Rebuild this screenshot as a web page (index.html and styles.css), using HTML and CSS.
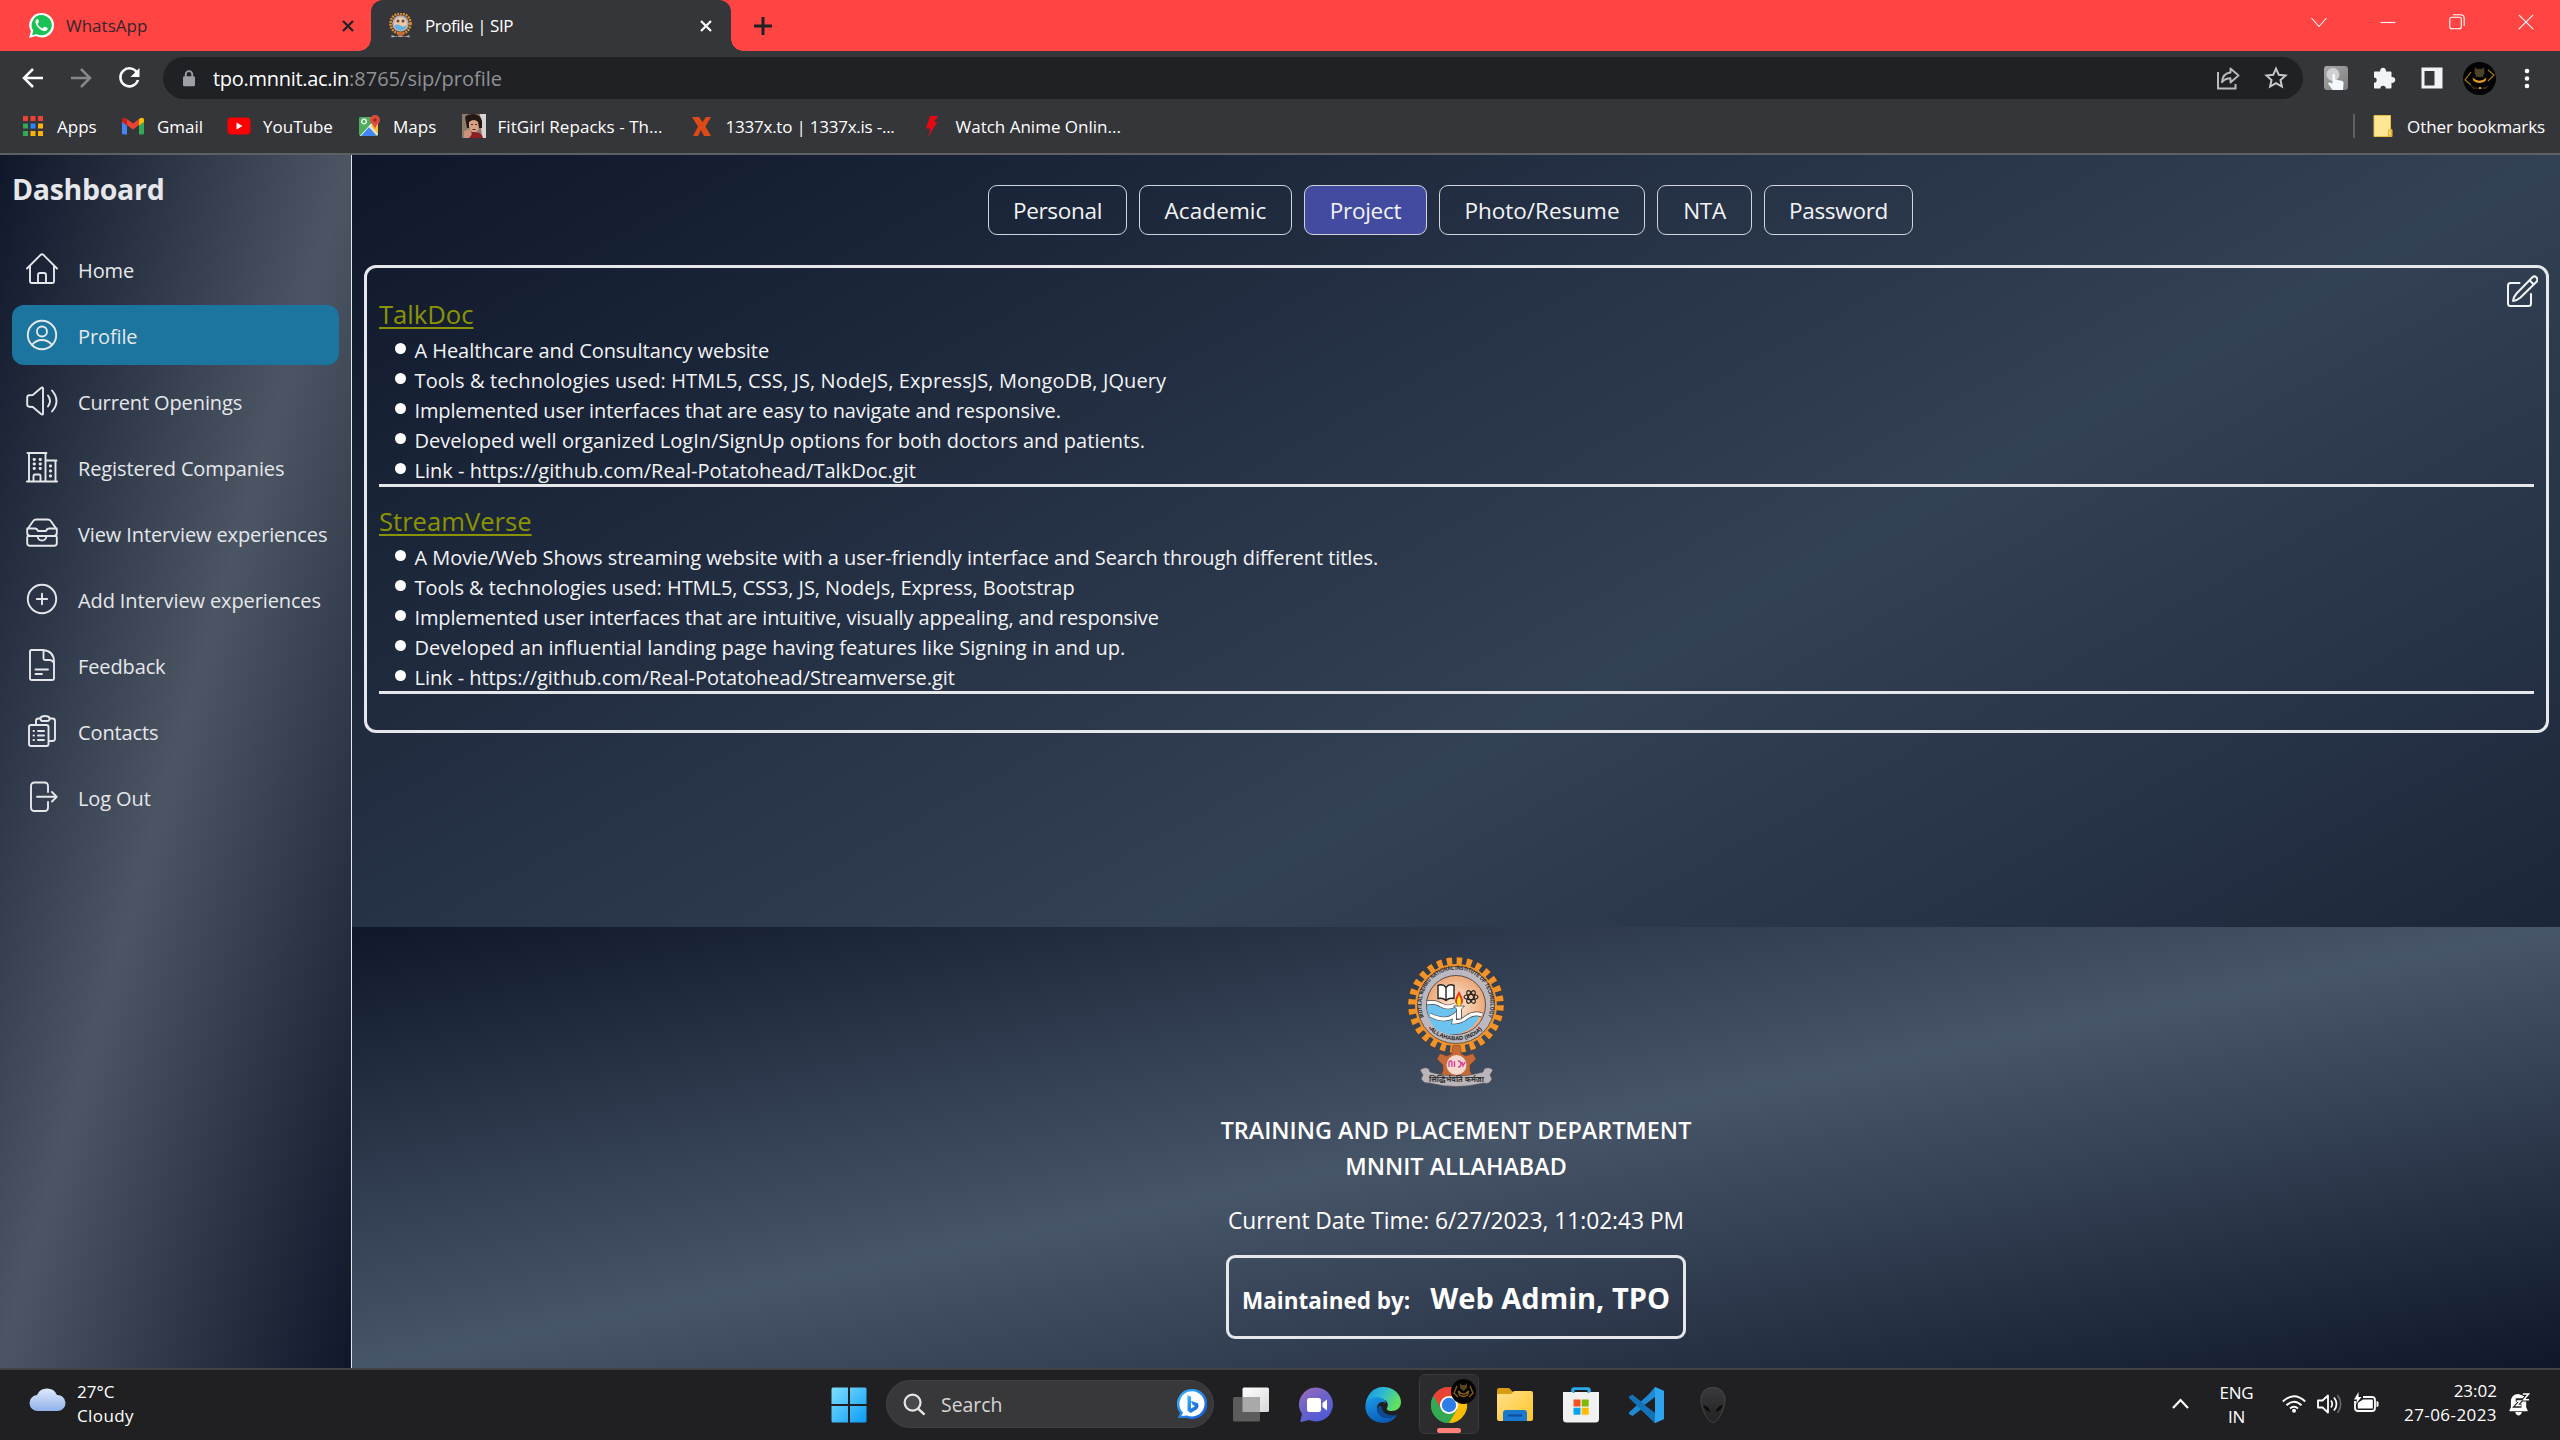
FILE: index.html
```html
<!DOCTYPE html>
<html lang="en">
<head>
<meta charset="utf-8">
<title>Profile | SIP</title>
<link rel="stylesheet" href="styles.css">
</head>
<body>
<svg class="defs" width="0" height="0">
  <defs>
    <path id="arcTop" d="M20.5 67 A34.5 34.5 0 1 1 79.500 67"/>
    <path id="arcBottom" d="M24 75 A38 38 0 0 0 76 75"/>
    <linearGradient id="win" x1="0" y1="0" x2="1" y2="1"><stop offset="0" stop-color="#7fe0ff"/><stop offset="1" stop-color="#0a9bf5"/></linearGradient>
    <linearGradient id="bing" x1="0" y1="0" x2="1" y2="1"><stop offset="0" stop-color="#37bdf8"/><stop offset="1" stop-color="#1553d8"/></linearGradient>
    <linearGradient id="chat" x1="0" y1="0" x2="0.6" y2="1"><stop offset="0" stop-color="#a06bb5"/><stop offset="0.5" stop-color="#6d63c9"/><stop offset="1" stop-color="#4f5bd5"/></linearGradient>
    <linearGradient id="edgeTop" x1="0" y1="0" x2="1" y2="0.4"><stop offset="0" stop-color="#1b8fe0"/><stop offset="0.5" stop-color="#2cb9d6"/><stop offset="1" stop-color="#63e05e"/></linearGradient>
    <linearGradient id="edgeBody" x1="0" y1="0" x2="0.5" y2="1"><stop offset="0" stop-color="#1a9be8"/><stop offset="1" stop-color="#0b5cb8"/></linearGradient>
    <linearGradient id="folder" x1="0" y1="0" x2="1" y2="1"><stop offset="0" stop-color="#ffe08a"/><stop offset="1" stop-color="#ffc52b"/></linearGradient>
    <linearGradient id="taskA" x1="0" y1="0" x2="1" y2="1"><stop offset="0" stop-color="#ffffff"/><stop offset="1" stop-color="#d8d8d8"/></linearGradient>
    <linearGradient id="cloud" x1="0" y1="0" x2="0" y2="1"><stop offset="0" stop-color="#dfe9fb"/><stop offset="1" stop-color="#8fb1ea"/></linearGradient>
    <linearGradient id="alien" x1="0" y1="0" x2="0" y2="1"><stop offset="0" stop-color="#3a3a3c"/><stop offset="1" stop-color="#222223"/></linearGradient>
    <radialGradient id="peach"><stop offset="0" stop-color="#fde9d6"/><stop offset="1" stop-color="#eda877"/></radialGradient>
    <linearGradient id="touch" x1="0" y1="0" x2="1" y2="1"><stop offset="0" stop-color="#a9a9a9"/><stop offset="1" stop-color="#7d7d7d"/></linearGradient>
  </defs>
</svg>

<div class="screen">
  <header class="browser">
    <div class="tabstrip">
      <div class="tab tab-idle">
        <svg class="favicon" viewBox="0 0 24 24"><path d="M12.200 0A11.700 11.700 0 0 1 24 11.800 11.700 11.700 0 0 1 12.200 23.500a11.700 11.700 0 0 1-5.600-1.400L0 24l1.800-6.400A11.700 11.700 0 0 1 12.200 0z" fill="#fff"/><path d="M12.200 2a9.700 9.700 0 1 1-4.900 18.100L2.900 21.300 4.100 17A9.700 9.700 0 0 1 12.200 2z" fill="#19c254"/><path d="M9 6.500c-.5-.8-1-.8-1.500-.5-1 .8-1.500 2-1.200 3.400.9 3.500 4 6.700 7.800 7.900 1.700.4 3.200-.4 3.700-1.700.2-.8.1-1.100-.4-1.400l-2.200-1c-.4-.1-.7 0-.9.300l-.9 1.100c-.3.200-.6.200-.9.100-2-.9-3.300-2.200-4.200-3.900-.1-.4 0-.6.200-.8l.8-1c.1-.3.100-.5 0-.8z" fill="#fff"/></svg>
        <span class="tab-title">WhatsApp</span>
        <svg class="close" viewBox="0 0 12 12"><path d="M1 1l10 10M11 1L1 11" stroke="#202124" stroke-width="2.200"/></svg>
      </div>
      <div class="tab tab-active">
        <svg class="favicon" viewBox="0 0 24 25"><circle cx="12" cy="10.500" r="10" fill="none" stroke="#e48f2c" stroke-width="2.600" stroke-dasharray="1.900 1"/><circle cx="12" cy="10.500" r="8.300" fill="#b3b0b5"/><circle cx="12" cy="10.500" r="6.200" fill="#f0c8a5"/><path d="M6 12.500q3-2 6 0t6 0a6.200 6.200 0 0 1-12 0z" fill="#5fb4e5"/><circle cx="9.500" cy="8" r="1.500" fill="#5c4a42"/><circle cx="14.500" cy="8" r="1.500" fill="#5c4a42"/><path d="M9 20.500l3-2 3 2-1 3h-4z" fill="#c4683a"/><path d="M3 22q9 4 18 0v2.500q-9-3-18 0z" fill="#b5b2b7"/></svg>
        <span class="tab-title">Profile | SIP</span>
        <svg class="close" viewBox="0 0 12 12"><path d="M1 1l10 10M11 1L1 11" stroke="#fff" stroke-width="2.200"/></svg>
      </div>
      <svg class="plus" viewBox="0 0 18 18"><path d="M9 0v18M0 9h18" stroke="#202124" stroke-width="3"/></svg>
      <div class="window-controls">
        <svg viewBox="0 0 16 16"><path d="M.5 4L8 12.500 15.500 4"/></svg>
        <svg viewBox="0 0 16 16"><path d="M.5 8.500h15"/></svg>
        <svg viewBox="0 0 16 16"><rect x=".8" y="3.200" width="11.500" height="11.500" rx="2"/><path d="M4 .8h7.500q3.700 0 3.700 3.700V12"/></svg>
        <svg viewBox="0 0 16 16"><path d="M.8.8l14.400 14.400M15.200.8L.8 15.200"/></svg>
      </div>
    </div>

    <div class="toolbar">
      <div class="nav">
        <svg viewBox="0 0 24 24"><path d="M22 12H4M12 3l-9 9 9 9" fill="none" stroke="#fff" stroke-width="2.500"/></svg>
        <svg viewBox="0 0 24 24"><path d="M2 12h18M12 3l9 9-9 9" fill="none" stroke="#86888b" stroke-width="2.500"/></svg>
        <svg viewBox="0 0 24 24"><path d="M20 6.500A9 9 0 1 0 21 14" fill="none" stroke="#fff" stroke-width="2.500"/><path d="M22.500 2v9h-9z" fill="#fff"/></svg>
      </div>
      <div class="omnibox">
        <svg class="lock" viewBox="0 0 13 18"><rect x="0" y="6.500" width="13" height="11" rx="1.500" fill="#9aa0a6"/><path d="M3 7V4.500a3.500 3.500 0 0 1 7 0V7" fill="none" stroke="#9aa0a6" stroke-width="2"/></svg>
        <span class="url"><span class="host">tpo.mnnit.ac.in</span>:8765/sip/profile</span>
        <svg class="omni-icon" viewBox="0 0 24 24"><path d="M2 6v16.500h17.500V18" fill="none" stroke="#b9bbbe" stroke-width="2"/><path d="M14.500 2.500l8 7-8 7v-4.300c-3.700 0-6 .8-8.500 4 .4-5.500 3.700-9.200 8.500-9.700z" fill="none" stroke="#b9bbbe" stroke-width="1.900" stroke-linejoin="round"/></svg>
        <svg class="omni-icon" viewBox="0 0 24 24"><path d="M12 2.600l2.800 6.200 6.700.7-5 4.500 1.400 6.600L12 17.200l-5.900 3.400 1.400-6.600-5-4.500 6.700-.7z" fill="none" stroke="#c6c8ca" stroke-width="2"/></svg>
      </div>
      <div class="extensions">
        <svg viewBox="0 0 24 24"><rect width="24" height="24" rx="3" fill="url(#touch)"/><circle cx="9" cy="8.500" r="6.500" fill="#d0d0d0"/><path d="M8.500 8.500q1.300-1.500 2.600 0v5l6.500 1.200q2 .5 2 2.300L19 24H8.500L4 17.500q1-2.200 4.500 0z" fill="#f4faff"/></svg>
        <svg viewBox="0 0 24 24"><path d="M3 5.500h5.200a3 3 0 1 1 5.800 0h4.500q1 0 1 1V11a3 3 0 1 1 0 5.800v4.700q0 1-1 1h-4.700a2.700 2.700 0 0 0-5.400 0H3q-1 0-1-1v-4.700a2.700 2.700 0 0 0 0-5.400V6.500q0-1 1-1z" fill="#f1f3f4"/></svg>
        <svg viewBox="0 0 24 24"><path d="M1.500 1.500h21v21h-21zM4.500 5v14.500h10V5z" fill="#f1f3f4" fill-rule="evenodd"/></svg>
        <svg class="avatar" viewBox="0 0 33 33"><circle cx="16.500" cy="16.500" r="16.500" fill="#020202"/><path d="M12 5l2 2h5l2-2 .5 6-2 4h-6l-2-4z" fill="#4b4126"/><path d="M8 10l-6 8 6 5M25 8l6 5-6 6" fill="none" stroke="#a8741a" stroke-width="1.200"/><path d="M9.500 15.500q7 6.500 14 0l-1 3.500q-6 4-12 0z" fill="#e79c19"/><path d="M7 23q9.500 6 19 0l-3 4H10z" fill="#332a16"/><circle cx="17" cy="26" r="1.200" fill="#d89a20"/></svg>
        <svg class="dots" viewBox="0 0 6 21"><circle cx="3" cy="3" r="2.300" fill="#fff"/><circle cx="3" cy="10.500" r="2.300" fill="#fff"/><circle cx="3" cy="18" r="2.300" fill="#fff"/></svg>
      </div>
    </div>

    <nav class="bookmarks">
      <a class="bm bm-apps"><svg viewBox="0 0 24 24"><path d="M2 2h5v5H2zM9.500 2h5v5h-5zM17 2h5v5h-5z" fill="#ea4335"/><path d="M2 9.500h5v5H2zM2 17h5v5H2z" fill="#34a853"/><path d="M9.500 9.500h5v5h-5z" fill="#2a84fc"/><path d="M17 9.500h5v5h-5zM9.500 17h5v5h-5zM17 17h5v5h-5z" fill="#fbb30a"/></svg>Apps</a>
      <a class="bm bm-gmail"><svg viewBox="0 0 24 24"><path d="M1 6v13q0 1.500 1.500 1.500H6V10z" fill="#4285f4"/><path d="M18 10v10.500h3.500q1.500 0 1.500-1.500V6z" fill="#34a853"/><path d="M6 5v6l6 4.500 6-4.500V5l-6 4.600z" fill="#ea4335"/><path d="M1 6v2l5 3.500V5L4.200 3.900Q1 3 1 6z" fill="#c5221f"/><path d="M18 5v6.500L23 8V6q0-3-3.200-2.100z" fill="#fbbc04"/></svg>Gmail</a>
      <a class="bm bm-youtube"><svg viewBox="0 0 24 24"><rect x=".5" y="3.500" width="23" height="17" rx="4" fill="#f00"/><path d="M9.500 8.500v7l6-3.500z" fill="#fff"/></svg>YouTube</a>
      <a class="bm bm-maps"><svg viewBox="0 0 24 24"><path d="M3 3h15l3 5v12q0 2-2 2H3q-1-1-1-2V5q0-2 1-2z" fill="#4fae5a"/><path d="M20 3L3 22h4l14-15z" fill="#fff"/><path d="M12 13L4 22h15z" fill="#4285f4"/><path d="M12 13l8 9 1-2V10l-4-3z" fill="#dfe3e8"/><path d="M14 12l7 8V12l-4-3z" fill="#fbc02d"/><path d="M18 1a5 5 0 0 1 5 5c0 3.500-4 4.500-5 9-1-4.500-5-5.500-5-9a5 5 0 0 1 5-5z" fill="#e04b3c"/><circle cx="18" cy="6" r="1.800" fill="#9a2a20"/><circle cx="7" cy="7.500" r="2.300" fill="none" stroke="#fff" stroke-width="1.300"/></svg>Maps</a>
      <a class="bm bm-fitgirl"><svg viewBox="0 0 24 24"><path d="M0 0h24v24H0z" fill="#8d7b6c"/><path d="M18 0h6v24h-4z" fill="#d8d4d2"/><path d="M3 3q2-3 9-3 7 1 8 7v7H5z" fill="#241815"/><path d="M7 8q5-4 9 0l1 6q-2 5-5 5-4-2-5-6z" fill="#d6a184"/><path d="M4 24q2-7 8-6 8 0 9 6z" fill="#8e1f22"/><path d="M2 17l5-2 3 5-3 4H2z" fill="#c9937a"/><path d="M9 10.500h2M13 10.500h2M10.500 15.500h3" stroke="#5a2420" stroke-width="1.200"/></svg>FitGirl Repacks - Th...</a>
      <a class="bm bm-x"><svg viewBox="0 0 24 24"><path d="M2 3h7l3.500 5L16 3h5l-5.500 9.500L21 22h-7l-3-6-3 6H3l5-9.500z" fill="#de4a17"/></svg>1337x.to | 1337x.is -...</a>
      <a class="bm bm-anime"><svg viewBox="0 0 24 24"><path d="M10 2h8l-4 6h3.500L8 23l2.500-8.500H6z" fill="#e50914"/></svg>Watch Anime Onlin...</a>
      <span class="bm-divider"></span>
      <a class="bm bm-other"><svg viewBox="0 0 24 24"><path d="M3 1.500h16.500v14.200H21V22.500H3z" fill="#ffe694" stroke="#e8bf3f" stroke-width="1"/><path d="M17.500 22v-6h3v6z" fill="#f5d35f" stroke="#d8ab29" stroke-width=".8"/></svg>Other bookmarks</a>
    </nav>
  </header>

  <div class="page">
    <aside class="sidebar">
      <h1 class="brand">Dashboard</h1>
      <nav class="menu">
        <a class="item"><svg viewBox="0 0 32 32"><path d="M1 15.500L14.600 1.900a2 2 0 0 1 2.800 0L31 15.500M4 13v15.500Q4 30 5.500 30h21q1.500 0 1.500-1.500V13M12 30v-8q0-2 2-2h4q2 0 2 2v8"/></svg><span>Home</span></a>
        <a class="item item-active"><svg viewBox="0 0 32 32"><circle cx="16" cy="16" r="14.200"/><circle cx="16" cy="12.500" r="5"/><path d="M6 26q4-5 10-5t10 5"/></svg><span>Profile</span></a>
        <a class="item"><svg viewBox="0 0 32 32"><path d="M1.200 12.500q0-2 2-2.200l3.600-.3 8.200-7q2-1.500 2 .5v25q0 2-2 .5l-8.200-7-3.600-.3q-2-.2-2-2.200zM22 10.500q4 5.500 0 11M26 5.500q9 10.500 0 21"/></svg><span>Current Openings</span></a>
        <a class="item"><svg viewBox="0 0 32 32"><path d="M.8 30.500h30.400M1.500 2h19M3 2v28M19.500 2v28M19.500 9.500h11M29.500 10v20M7.500 30v-5q0-1.500 1.500-1.500h4q1.500 0 1.500 1.500v5"/><path d="M8 8.500h.5M14 8.500h.5M8 13h.5M14 13h.5M8 17.500h.5M14 17.500h.5M24.300 15h.4M24.300 20h.4M24.300 25h.4" stroke-width="2.800"/></svg><span>Registered Companies</span></a>
        <a class="item"><svg viewBox="0 0 32 32"><path d="M1.200 12.500l6-8.500q1-1.500 3-1.500h11.600q2 0 3 1.500l6 8.500v3.500q0 3-3 3H4.200q-3 0-3-3zM1.200 11.500H9q2 0 3 2.500h8q1-2.500 3-2.500h7.800M3 18.500q-1.800.5-1.800 2V26q0 2.800 2.800 2.800h24q2.800 0 2.800-2.800v-5.500q0-1.500-1.800-2M11.500 19q.5 4.500 4.500 4.500t4.500-4.500"/></svg><span>View Interview experiences</span></a>
        <a class="item"><svg viewBox="0 0 32 32"><circle cx="16" cy="16" r="14.200"/><path d="M16 10.800v10.400M10.800 16h10.400"/></svg><span>Add Interview experiences</span></a>
        <a class="item"><svg viewBox="0 0 32 32"><path d="M4 2.500Q4 1 5.500 1H17q11 1 11 12v16.500q0 1.500-1.500 1.500h-21Q4 31 4 29.500zM17.500 1.500v8q0 1.500 1.500 1.500h4q3.500 0 5 3M9.500 20.500H22M9.500 25H16"/></svg><span>Feedback</span></a>
        <a class="item"><svg viewBox="0 0 32 32"><rect x="3" y="10" width="19.500" height="21" rx="2"/><path d="M10 9.500V6q0-2.500 2.500-2.500H14q1-2.500 5-2.500t5 2.500h2.500Q29 3.500 29 6v17.500q0 2.500-2.500 2.500H23"/><path d="M14.500 3.500q0 2.500 2 2.500h5q2 0 2-2.500M12 16h6M12 20.500h6M12 25h6M7.500 16h.5M7.500 20.500h.5M7.500 25h.5"/></svg><span>Contacts</span></a>
        <a class="item"><svg viewBox="0 0 32 32"><path d="M22 11V5q0-3.500-3.500-3.500h-10Q5 1.500 5 5v21.500Q5 30 8.500 30h10q3.500 0 3.500-3.500V21M11 15.800h19.500M26 11l4.700 4.800L26 20.500"/></svg><span>Log Out</span></a>
      </nav>
    </aside>

    <main class="content">
      <div class="tabs">
        <button class="pill w-personal">Personal</button>
        <button class="pill w-academic">Academic</button>
        <button class="pill w-project pill-active">Project</button>
        <button class="pill w-photo">Photo/Resume</button>
        <button class="pill w-nta">NTA</button>
        <button class="pill w-password">Password</button>
      </div>
      <section class="card">
        <svg class="edit" viewBox="0 0 32 32"><path d="M13.500 8H4.500Q2 8 2 10.500v18Q2 31 4.500 31h18q2.500 0 2.500-2.500V19"/><path d="M26.200 2.500a3 3 0 0 1 4.300 4.300L14.500 22.500q-3.500 3-7.500 3.500.5-4 3.500-7.500zM23.500 5.200l4.300 4.300"/></svg>
        <article class="project">
          <h2>TalkDoc</h2>
          <ul>
            <li>A Healthcare and Consultancy website</li>
            <li class="line-wide">Tools &amp; technologies used: HTML5, CSS, JS, NodeJS, ExpressJS, MongoDB, JQuery</li>
            <li class="line-tight">Implemented user interfaces that are easy to navigate and responsive.</li>
            <li class="line-link">Developed well organized LogIn/SignUp options for both doctors and patients.</li>
            <li class="line-link">Link - https://github.com/Real-Potatohead/TalkDoc.git</li>
          </ul>
        </article>
        <article class="project">
          <h2>StreamVerse</h2>
          <ul>
            <li>A Movie/Web Shows streaming website with a user-friendly interface and Search through different titles.</li>
            <li>Tools &amp; technologies used: HTML5, CSS3, JS, NodeJs, Express, Bootstrap</li>
            <li class="line-tight">Implemented user interfaces that are intuitive, visually appealing, and responsive</li>
            <li class="line-link">Developed an influential landing page having features like Signing in and up.</li>
            <li>Link - https://github.com/Real-Potatohead/Streamverse.git</li>
          </ul>
        </article>
      </section>
      <footer class="footer">
        <svg class="crest" viewBox="0 0 100 136">
          <circle cx="50" cy="50" r="43.500" fill="none" stroke="#4a3420" stroke-width="9.600" stroke-dasharray="5.900 3.862"/>
          <circle cx="50" cy="50" r="43.500" fill="none" stroke="#f0932a" stroke-width="8.600" stroke-dasharray="5.300 4.462" stroke-dashoffset="-.3"/>
          <circle cx="50" cy="50" r="41" fill="#f0932a"/>
          <circle cx="50" cy="50" r="38.500" fill="#bcb8bf" stroke="#3c3433" stroke-width=".7"/>
          <circle cx="50" cy="50" r="29.500" fill="url(#peach)" stroke="#3c3433" stroke-width=".8"/>
          <path d="M21 49q8-2 14 2 6 3 15-1 8 4 4 12l-7 4q8 2 17-5l10-1a29 29 0 0 1-44 14Q21 65 21 49z" fill="#6cc3ef"/>
          <path d="M21 48q8-2 14 2 7 4 14 0M24 60q8 4 14 4 6 0 11-4l-1 7q7 0 13-5 7-5 15-2" fill="none" stroke="#4a4342" stroke-width="4.600"/>
          <path d="M21 48q8-2 14 2 7 4 14 0M24 60q8 4 14 4 6 0 11-4l-1 7q7 0 13-5 7-5 15-2" fill="none" stroke="#fff" stroke-width="3.300"/>
          <path d="M47.500 51h11l-3 3v10h-5V54z" fill="#fff" stroke="#4a4342" stroke-width=".8"/>
          <path d="M53 36q-4 7-4 10t4 5q4-2 4-5t-4-10z" fill="#e8351b"/><path d="M53 40q-2 4-2 7t2 4q2-1 2-4t-2-7z" fill="#ffe71f"/>
          <path d="M32 30.500q5-2 8 2 3-4 8-2v13q-5-1-8 2-3-3-8-2zM40 33v12" fill="#fff" stroke="#222" stroke-width="1.400"/>
          <g fill="none" stroke="#222" stroke-width="1.200"><ellipse cx="65" cy="42" rx="7" ry="2.500"/><ellipse cx="65" cy="42" rx="7" ry="2.500" transform="rotate(60 65 42)"/><ellipse cx="65" cy="42" rx="7" ry="2.500" transform="rotate(120 65 42)"/></g>
          <text class="crest-text"><textPath href="#arcTop" startOffset="50%" text-anchor="middle" textLength="134" lengthAdjust="spacingAndGlyphs">MOTILAL NEHRU NATIONAL INSTITUTE OF TECHNOLOGY</textPath></text>
          <text class="crest-text"><textPath href="#arcBottom" startOffset="50%" text-anchor="middle">ALLAHABAD (INDIA)</textPath></text>
          <circle cx="24" cy="73" r="1.100" fill="#c33"/><circle cx="73" cy="73" r="1.100" fill="#c33"/>
          <path d="M47 90.500h7l1.500 8.500 4.500 2 7-2.500 3 5.500-6 6v6l4 8-13-1-1.500 8.500h-7L45 123l-12 1 4-8v-6l-6-6 3-5.500 7 2.500 4.500-2z" fill="#c56a37" stroke="#6d3a1e" stroke-width=".5"/>
          <circle cx="50.500" cy="110" r="10" fill="#f4d9cf"/>
          <path d="M43 112v-5q2-2 3 0v5M48.500 112v-6M52 106q3 0 3 3t-3 3M56 107l1 4 2-4" fill="none" stroke="#e2379b" stroke-width="1.300"/>
          <path d="M14 115q5-4 9-1l1 3q26 8 53 0l1-3q5-3 9 1l-3 5 2 4q-3 6-8 4-28 7-55 0-5 1-8-4l2-4z" fill="#b9b5ba" stroke="#4f4a4e" stroke-width=".6"/>
          <text class="crest-motto" x="50.500" y="127" text-anchor="middle">सिद्धिर्भवति कर्मजा</text>
        </svg>
        <p class="dept">TRAINING AND PLACEMENT DEPARTMENT<br>MNNIT ALLAHABAD</p>
        <p class="clock">Current Date Time: 6/27/2023, 11:02:43 PM</p>
        <div class="maintained"><span class="by">Maintained by:</span><span class="admin">Web Admin, TPO</span></div>
      </footer>
    </main>
  </div>

  <div class="taskbar">
    <div class="weather">
      <svg viewBox="0 0 38 26"><path d="M9 25a8 8 0 0 1-1-16A11 11 0 0 1 28 9a8 8 0 0 1 1 16z" fill="url(#cloud)"/></svg>
      <span>27°C<br><span class="cloudy">Cloudy</span></span>
    </div>
    <div class="dock">
      <svg class="app start" viewBox="0 0 36 36"><path d="M2 .5h15v16.500H.5V2Q.5.500 2 .5zM19 .5h15q1.500 0 1.500 1.500v15H19zM.5 19H17v16.500H2Q.5 35.500.5 34zM19 19h16.500v15q0 1.500-1.500 1.500H19z" fill="url(#win)"/></svg>
      <div class="search">
        <svg class="glass" viewBox="0 0 24 24"><circle cx="10" cy="10" r="8.300" fill="#4a4a4c" stroke="#e6e6e6" stroke-width="2.300"/><path d="M16 16.500l6.500 6" stroke="#e6e6e6" stroke-width="2.600"/></svg>
        <span>Search</span>
        <svg class="bing" viewBox="0 0 30 30"><path d="M15 0a15 15 0 1 1-5 29H1l2-5A15 15 0 0 1 15 0z" fill="url(#bing)"/><path d="M15 2.200a12.600 12.600 0 1 1-5 24.200L4.500 27 6 23.500A12.600 12.600 0 0 1 15 2.200z" fill="#fff"/><path d="M10.500 6l3.500 2v11.500l4-2.200-2.500-1.600-1.600-4L21 14.200q1.500 4-1.500 6.300L13.700 24l-3.200-2.200z" fill="url(#bing)"/></svg>
      </div>
      <svg class="app task" viewBox="0 0 36 36"><rect x="9.500" y=".5" width="26.500" height="24.500" rx="1.500" fill="url(#taskA)"/><rect x="0" y="10" width="27" height="24.500" rx="1.500" fill="#5c5c5c"/><path d="M9.500 10H27v15H9.500z" fill="#a9a9a9"/></svg>
      <svg class="app chat" viewBox="0 0 36 36"><path d="M18 .5A17 17 0 1 1 10 33l-7.500 2q-1.500 0-1-1.500L3 27A17 17 0 0 1 18 .5z" fill="url(#chat)"/><rect x="8" y="11" width="14" height="14" rx="2.500" fill="#fff"/><path d="M23.500 16l4.500-3.500v11L23.500 20z" fill="#fff"/></svg>
      <svg class="app edge" viewBox="0 0 36 36"><path d="M.5 19C1 8 8 0 18 0c11 0 18 7.500 18 15 0 6-4.500 9-9.500 9-3.500 0-5.500-1.500-4.500-3 2-3.500.5-8-5-8.500C10 12 3 15 .5 19z" fill="url(#edgeTop)"/><path d="M.5 18.500C1.500 12.500 7 9.500 12.500 10c5 .4 8 3 8.500 6-5-3-9.500.5-9 6 .5 6 6 9.500 12 9 4-.3 6.500-1.800 8-2.700Q27 36 18 36C8 36-.5 28.500.5 18.500z" fill="url(#edgeBody)"/><path d="M12 22c.5 6 6 9.500 12 9 4-.3 6.500-1.800 9.300-3.500-5 1.500-16 2-16.800-8-2-1.500-4.300.5-4.500 2.500z" fill="#0a4b94"/></svg>
      <div class="chrome-slot">
        <svg class="chrome" viewBox="0 0 36 36"><circle cx="18" cy="18" r="18" fill="#34a853"/><path d="M18 18L2.400 9A18 18 0 0 1 33.600 9z" fill="#ea4335"/><path d="M18 9h15.600A18 18 0 0 1 18 36l8-13.500z" fill="#fbbc04"/><path d="M2.400 9l8 13.500L18 18V9z" fill="#ea4335"/><path d="M2.400 9l7.800 13.500 2.300 3.500L18 36A18 18 0 0 1 2.400 9z" fill="#34a853"/><circle cx="18" cy="18" r="9" fill="#fff"/><circle cx="18" cy="18" r="7.200" fill="#2f7de9"/></svg>
        <svg class="badge" viewBox="0 0 25 25"><circle cx="12.500" cy="12.500" r="12.500" fill="#050403"/><path d="M9 4l1.500 2h4L16 4v5l-3.500 3L9 9z" fill="#5a4420"/><path d="M6 7l-3 7 4 4M19 7l3 7-4 4M7.500 12q5 6 10 0l-1 4q-4 3-8 0z" fill="none" stroke="#8d6218" stroke-width="1.300"/></svg>
        <span class="running"></span>
      </div>
      <svg class="app folder" viewBox="0 0 36 36"><path d="M0 3q0-2 2-2h10l4 4v6H0z" fill="#d99b10"/><path d="M0 7h14l3-3h17q2 0 2 2v26q0 2-2 2H2q-2 0-2-2z" fill="url(#folder)"/><path d="M6 34V26q0-3 3-3h18q3 0 3 3v8z" fill="#1b78cf"/><path d="M11 28.500h14" stroke="#0c4d93" stroke-width="2"/></svg>
      <svg class="app store" viewBox="0 0 36 36"><path d="M9.500 8V3q0-1.500 1.500-1.500h14q1.500 0 1.500 1.500v5" fill="none" stroke="#29a9ea" stroke-width="2.600"/><path d="M0 5h36v27q0 3.500-3.500 3.500h-29Q0 35.500 0 32z" fill="#f1f1f1"/><path d="M10.500 6V3q0-1 1-1h13q1 0 1 1v3" fill="none" stroke="#29a9ea" stroke-width="2"/><path d="M10.500 12.500h7v7h-7z" fill="#f25022"/><path d="M18.700 12.500h7v7h-7z" fill="#7fba00"/><path d="M10.500 20.700h7v7h-7z" fill="#00a4ef"/><path d="M18.700 20.700h7v7h-7z" fill="#ffb900"/></svg>
      <svg class="app code" viewBox="0 0 36 36"><path d="M26 0l9 4v28l-9 4-14-13.500L3.500 29 0 27V25.500L20 7z" fill="#1e8ad6"/><path d="M26 10v16L3.500 7.500 0 9.500V11l12 11.500L26 36z" fill="#1473b8"/><path d="M26 10L15.500 18 26 26z" fill="#202022"/><path d="M26 0l9 4v28l-9 4z" fill="#2ea4ee"/></svg>
      <svg class="app alien" viewBox="0 0 36 36"><path d="M18 .5c7.500 0 12 5 12 12.500S24 34.500 18 35.500C12 34.500 6 21 6 13S10.500.5 18 .5z" fill="url(#alien)" stroke="#4a4a4c" stroke-width=".9"/><path d="M8 18q5.500.5 7.500 7-5.500-1-7.500-7zM28 18q-5.500.5-7.500 7 5.500-1 7.500-7z" fill="#0c0c0d"/></svg>
    </div>
    <div class="tray">
      <svg class="chev" viewBox="0 0 17 11"><path d="M1 10l7.500-8 7.500 8" fill="none" stroke="#fff" stroke-width="2.200"/></svg>
      <span class="lang">ENG<br>IN</span>
      <svg class="wifi" viewBox="0 0 24 18"><path d="M.8 6.500q11.200-10.500 22.400 0M4.500 10.200q7.500-7 15 0M8 13.500q4-3.500 8 0" fill="none" stroke="#fff" stroke-width="1.900"/><circle cx="12" cy="15.800" r="2" fill="#fff"/></svg>
      <svg class="vol" viewBox="0 0 26 20"><path d="M1 6.500h4.500L11 1.500v17L5.500 13.500H1z" fill="none" stroke="#fff" stroke-width="1.800" stroke-linejoin="round"/><path d="M14 6.500q2.500 3.500 0 7M17 3.500q5 6.500 0 13" fill="none" stroke="#fff" stroke-width="1.700"/><path d="M20.500 1q6.500 9 0 18" fill="none" stroke="#69696b" stroke-width="1.600"/></svg>
      <svg class="batt" viewBox="0 0 25 20"><path d="M1 9v7q0 3 3 3h14q3 0 3-3V8q0-3-3-3H9" fill="none" stroke="#fff" stroke-width="1.800"/><path d="M3.800 16.500V11L9 7.500h9q.8 0 .8.800v8.200H4z" fill="#fff"/><path d="M22.500 9q2 0 2 1.500v3q0 1.500-2 1.500z" fill="#fff"/><path d="M4.500 0L0 7.500h3L2 12l5.500-7h-3z" fill="#fff"/></svg>
      <span class="time">23:02<br><span class="date">27-06-2023</span></span>
      <svg class="bell" viewBox="0 0 22 24"><path d="M10 1.500q-8 0-8 8.500v5.500L.5 18.500q-.5 1 .5 1h18q1 0 .5-1L18 15.500V10l-2-6z" fill="#fff"/><path d="M6.500 20.500h7q-1 3.500-3.500 3.500t-3.500-3.500z" fill="#fff"/><path d="M7 8h6L7.500 14H13M14.500 1.500h6l-5 6H21" fill="none" stroke="#202022" stroke-width="3.800"/><path d="M14.500 1.500h6l-5 6H21M8 9h4L8 13.500h4.500" fill="none" stroke="#fff" stroke-width="1.600"/></svg>
    </div>
  </div>
</div>
</body>
</html>
```
FILE: styles.css
```css
* { box-sizing: border-box; }
body {
  margin: 0;
  background: #202022;
  color: #f3f4f6;
  font-family: "Open Sans", "Noto Sans", sans-serif;
  font-size: 20px;
}
h1, h2, p, ul { margin: 0; padding: 0; }
svg { display: block; flex: none; }
.defs { position: absolute; }
.screen {
  display: flex;
  flex-direction: column;
  width: 2560px;
  height: 1440px;
  overflow: hidden;
}

/* Browser chrome */
.browser {
  flex: none;
  height: 155px;
  background: #35363a;
  border-bottom: 2px solid #5f6063;
  font-size: 17px;
  color: #fff;
}
.tabstrip { display: flex; height: 51px; background: #ff4444; }
.tab { display: flex; align-items: center; height: 51px; }
.tab-idle { width: 371px; padding: 0 17px 0 29px; color: #33262a; }
.tab-active {
  position: relative;
  width: 360px;
  padding: 0 19px 0 17px;
  background: #35363a;
  border-radius: 12px 12px 0 0;
  letter-spacing: -0.44px;
}
.tab-active::before, .tab-active::after {
  content: "";
  position: absolute;
  bottom: 0;
  width: 12px;
  height: 12px;
}
.tab-active::before { left: -12px; background: radial-gradient(circle at 0 0, transparent 11.5px, #35363a 12px); }
.tab-active::after { right: -12px; background: radial-gradient(circle at 100% 0, transparent 11.5px, #35363a 12px); }
.favicon { width: 25px; height: 25px; margin-right: 12px; }
.tab-title { flex: 1; }
.close { width: 12px; height: 12px; }
.plus { width: 18px; height: 18px; margin: 17px 0 0 23px; }
.window-controls { display: flex; gap: 53px; margin: 14px 26px 0 auto; }
.window-controls svg { width: 16px; height: 16px; fill: none; stroke: #fff; stroke-width: 1.1; }

.toolbar { display: flex; align-items: center; height: 54px; }
.nav { display: flex; gap: 24px; width: 163px; padding-left: 21px; }
.nav svg { width: 24px; height: 24px; }
.omnibox {
  display: flex;
  align-items: center;
  width: 2140px;
  height: 42px;
  padding: 0 15px 0 20px;
  border-radius: 21px;
  background: #202124;
  font-size: 20px;
  color: #8f9194;
}
.lock { width: 12px; height: 17px; margin-right: 18px; }
.url { flex: 1; }
.host { color: #fff; letter-spacing: -0.29px; }
.omni-icon { width: 24px; height: 24px; margin-left: 24px; }
.extensions { display: flex; align-items: center; margin-left: 21px; gap: 24px; }
.extensions svg { width: 24px; height: 24px; }
.extensions .avatar { width: 33px; height: 33px; margin-left: -5px; }
.extensions .dots { width: 6px; height: 21px; margin-left: 4px; }

.bookmarks { display: flex; align-items: center; height: 42px; padding: 0 15px 0 21px; gap: 24px; }
.bm { display: flex; align-items: center; gap: 12px; white-space: nowrap; }
.bm svg { width: 24px; height: 24px; }
.bm-apps { width: 76px; }
.bm-gmail { width: 82px; }
.bm-youtube { width: 106px; }
.bm-maps { width: 80.5px; }
.bm-fitgirl { width: 204px; letter-spacing: 0.05px; }
.bm-x { width: 206px; letter-spacing: -0.23px; }
.bm-divider { width: 2px; height: 24px; margin-left: auto; margin-right: -8px; background: #5f6063; }
.bm-other { letter-spacing: -0.11px; }

/* Page */
.page { flex: none; display: flex; height: 1213px; }
.sidebar {
  width: 352px;
  border-right: 1px solid #e5e7eb;
  background: linear-gradient(to bottom right, #0f172a, #4b5563, #0f172a);
  padding: 12px 12px 0;
  color: #e5e7eb;
}
.brand { font-size: 28.5px; line-height: 44px; font-weight: 700; letter-spacing: -0.3px; }
.menu { display: flex; flex-direction: column; gap: 6px; margin-top: 28px; }
.item {
  display: flex;
  align-items: center;
  gap: 20px;
  height: 60px;
  padding-left: 14px;
  border-radius: 12px;
  letter-spacing: -0.12px;
  white-space: nowrap;
}
.item span { padding-top: 2px; }
.item svg { width: 32px; height: 32px; fill: none; stroke: #e5e7eb; stroke-width: 1.9; stroke-linecap: round; stroke-linejoin: round; }
.item-active { background: #1b759f; }

.content {
  flex: 1;
  display: flex;
  flex-direction: column;
  background: linear-gradient(to bottom right, #0f172a, #334155, #0f172a);
}
.tabs { display: flex; gap: 12px; height: 110px; padding: 30px 0 0 636px; }
.pill {
  height: 50px;
  padding: 1px 0 0;
  border: 1px solid #d1d5db;
  border-radius: 9px;
  background: none;
  color: #f3f4f6;
  font: 22.5px "Open Sans", sans-serif;
  letter-spacing: -0.3px;
}
.pill-active { background: #434ba0; }
.w-personal { width: 139px; }
.w-academic { width: 153px; letter-spacing: 0.1px; }
.w-project { width: 123px; }
.w-photo { width: 206px; letter-spacing: 0; }
.w-nta { width: 95px; }
.w-password { width: 149px; }

.card {
  position: relative;
  height: 468px;
  margin: 0 11px 0 12px;
  padding: 12px;
  border: 3px solid #e5e7eb;
  border-radius: 12px;
}
.edit {
  position: absolute;
  top: 7px;
  right: 8px;
  width: 32px;
  height: 32px;
  fill: none;
  stroke: #f3f4f6;
  stroke-width: 2;
  stroke-linecap: round;
  stroke-linejoin: round;
}
.project { height: 207px; padding-top: 13.5px; border-bottom: 3px solid #e5e7eb; }
.project h2 {
  color: #8a9302;
  font-size: 25.6px;
  font-weight: 400;
  line-height: 42px;
  text-decoration: underline;
  text-decoration-thickness: 2px;
  text-underline-offset: 3px;
}
.project ul { list-style: none; line-height: 30px; letter-spacing: -0.05px; white-space: nowrap; }
.project li { display: flex; align-items: center; }
.project li::before {
  content: "";
  width: 11px;
  height: 11px;
  margin: -5px 9px 0 15.5px;
  border-radius: 50%;
  background: #fff;
}
.project .line-wide { letter-spacing: 0.11px; }
.project .line-tight { letter-spacing: -0.13px; }
.project .line-link { letter-spacing: 0.03px; }

.footer {
  display: flex;
  flex-direction: column;
  align-items: center;
  height: 441px;
  margin-top: auto;
  padding-top: 28px;
  background: linear-gradient(to bottom right, #0f172a, #475569, #0f172a);
  color: #fff;
}
.crest { width: 100px; height: 136px; }
.crest-text { font: 700 5.8px "Liberation Sans", sans-serif; fill: #222; }
.crest-motto { font: 700 7.5px "Noto Sans", sans-serif; fill: #333; }
.dept { margin-top: 21px; font-size: 23.3px; font-weight: 600; line-height: 36px; letter-spacing: 0.03px; text-align: center; }
.clock { margin-top: 19px; font-size: 22.8px; line-height: 36px; letter-spacing: -0.05px; }
.maintained {
  display: flex;
  align-items: baseline;
  justify-content: center;
  gap: 20px;
  width: 460px;
  height: 84px;
  margin-top: 16px;
  border: 3px solid #e5e7eb;
  border-radius: 9px;
  font-weight: 700;
  line-height: 79px;
}
.by { font-size: 22.5px; }
.admin { font-size: 29px; }

/* Taskbar */
.taskbar {
  flex: none;
  display: flex;
  height: 72px;
  border-top: 2px solid #434343;
  background: #202022;
  color: #fff;
  font-size: 17px;
  line-height: 24px;
}
.weather { display: flex; gap: 10px; width: 831px; padding: 10px 0 0 29px; }
.weather svg { width: 38px; height: 26px; margin-top: 6px; }
.cloudy { letter-spacing: 0.4px; }
.dock { display: flex; height: 70px; }
.app { width: 36px; height: 36px; margin: 17px 30px 0 0; }
.start { margin-right: 19px; }
.search {
  display: flex;
  align-items: center;
  width: 328px;
  height: 48px;
  margin: 10px 19px 0 0;
  padding: 0 6px 0 16px;
  border: 1px solid #414143;
  border-radius: 24px;
  background: #38383a;
  color: #d6d6d6;
  font-size: 19.4px;
}
.search span { flex: 1; padding-top: 1px; }
.glass { width: 23px; height: 23px; margin-right: 15px; }
.bing { width: 30px; height: 30px; }
.edge { margin-right: 18px; }
.chrome-slot {
  position: relative;
  width: 60px;
  height: 60px;
  margin: 4px 18px 0 0;
  border: 1px solid #3a3a3c;
  border-radius: 6px;
  background: #2c2c2e;
}
.chrome { width: 36px; height: 36px; margin: 12px 0 0 11px; }
.badge { position: absolute; right: 2px; top: 4px; width: 25px; height: 25px; }
.running { position: absolute; left: 17px; bottom: 0; width: 24px; height: 5px; border-radius: 3px; background: #ff8078; }
.alien { margin-right: 0; }
.tray { display: flex; width: 388px; margin-left: auto; }
.chev { width: 17px; height: 11px; margin-top: 28px; }
.lang { width: 95px; margin: 11px 0 0 0; text-align: center; letter-spacing: -0.2px; }
.wifi { width: 24px; height: 18px; margin: 25px 0 0 -2px; }
.vol { width: 26px; height: 20px; margin: 24px 0 0 11px; }
.batt { width: 25px; height: 20px; margin: 22px 0 0 11px; }
.time { width: 118px; margin-top: 9px; text-align: right; }
.date { letter-spacing: 0.43px; }
.bell { width: 21px; height: 24px; margin: 22px 0 0 12px; }
```
